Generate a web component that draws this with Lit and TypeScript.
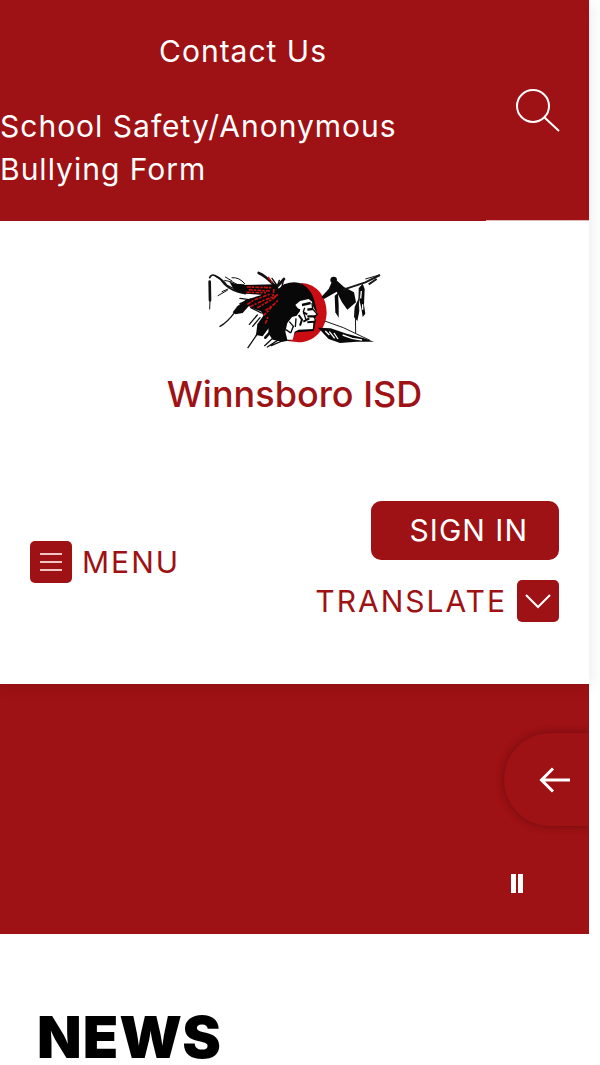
import { LitElement, html, css, svg } from "lit";
import { customElement } from "lit/decorators.js";

const emblem = svg`
  <g fill="none" stroke="#111" stroke-linecap="round">
    <path stroke-width="8" d="M29 62 L30 118"/>
    <path stroke-width="3" d="M30 118 L29 144"/>
    <path stroke-width="5" d="M29 50 Q34 38 46 44 Q62 52 72 68 Q88 84 112 92 L136 98"/>
    <path stroke-width="4" d="M48 46 Q68 54 80 72 L104 84"/>
    <path stroke-width="3" d="M54 104 L82 88 M66 92 L84 84 M76 48 L96 60 M96 50 Q118 48 134 68 M74 58 Q100 60 122 76"/>
    <path stroke-width="4" d="M60 196 Q82 184 104 154 M144 260 Q160 236 182 204 M148 190 L172 162 M158 196 L180 170 M120 112 L148 116 M120 128 L152 114 M152 140 L184 156 M194 254 L218 232 M202 258 L236 236 M214 254 L250 238"/>
    <path stroke-width="8" d="M176 36 Q196 44 224 74 M196 230 L210 214 M232 76 L252 54"/>
    <path stroke-width="4" d="M216 52 L230 72 M238 58 L230 82 M250 60 L244 84"/>
  </g>
  <path fill="#ca0d12" d="M302 66 C354 68 380 110 380 156 C378 206 342 244 296 244 L262 240 280 226 290 206 340 206 320 90Z"/>
  <g fill="#080808">
    <path d="M88 62 L106 68 132 70 144 84 142 98 118 96 102 86Z"/>
    <path d="M120 72 L228 70 240 90 214 104 140 98Z"/>
    <path d="M98 154 L112 136 136 118 160 116 146 136 128 156 106 160Z"/>
    <path d="M134 118 L216 92 244 100 236 150 204 160 150 138Z"/>
    <path d="M168 222 L172 190 190 164 214 150 224 176 204 204 188 226Z"/>
    <path d="M184 152 L232 86 252 70 Q282 58 306 68 Q328 82 338 104 L344 122 350 148 344 186 342 210 288 214 272 238 248 242 218 236 206 218 204 190Z"/>
  </g>
  <g fill="none" stroke="#c81010" stroke-width="5" stroke-dasharray="12 3 7 4">
    <path d="M140 78 L216 80 M146 86 L210 90 M140 94 L198 95 M204 48 L218 66"/>
    <path d="M142 130 L164 116 214 98 M150 137 L186 120 230 104 M172 140 L218 114 234 100 M196 148 L220 132 234 118 M190 164 L208 146 218 132 M196 188 L204 168 M222 84 L218 108"/>
  </g>
  <g fill="#fff">
    <path d="M286 132 L300 120 326 114 336 122 340 138 352 160 342 166 348 174 340 184 340 204 296 206 284 212 278 236 262 236 256 212 262 186 276 168 290 164 300 150Z"/>
  </g>
  <g fill="none" stroke="#080808">
    <path stroke-width="7" d="M306 132 L332 126 M286 144 L300 148 M322 146 L338 144 M322 166 L346 166"/>
    <path stroke-width="6" d="M296 162 L306 176 300 194 M310 154 L322 160 M310 182 L328 172 M322 184 L342 182"/>
    <path stroke-width="4" d="M268 182 L280 196 272 216 M288 172 L286 198 M258 206 L272 216 M314 140 L310 152 318 176 M336 126 L338 144 352 160 342 168 346 176 340 204"/>
  </g>
  <g fill="#090909">
    <circle cx="401" cy="57" r="10"/>
    <path d="M394 66 L412 60 432 78 462 94 468 124 442 146 426 124 410 92 372 114 364 108 386 84Z"/>
    <path d="M404 104 L414 96 416 132 416 170 406 154Z"/>
    <path d="M476 82 L488 68 494 84 492 132 496 158 488 168 484 142 478 116Z"/>
    <path d="M464 138 L476 112 478 150 472 180 462 168Z"/>
    <path d="M354 200 L392 202 440 218 492 232 522 242 470 242 420 246 386 234Z"/>
  </g>
  <g fill="none" stroke="#181818">
    <path stroke-width="6" d="M430 86 L496 64 540 42 M506 70 L530 54"/>
    <path stroke-width="3" d="M496 54 L538 42 M466 150 L467 216 M374 180 L430 200 510 238 M478 86 L474 160"/>
  </g>
  <g fill="none" stroke="#fff" stroke-width="4">
    <path d="M376 210 L388 222 M388 212 L404 232 M402 216 L414 234 M428 222 L456 232 486 237 M484 90 L482 112 M488 130 L488 146"/>
  </g>`;

@customElement("app-root")
export class AppRoot extends LitElement {
  static styles = css`
    :host {
      display: block;
      min-height: 100vh;
      overflow: hidden;
      background: #fff;
      color: #9e1114;
      font-family: Inter, "Liberation Sans", sans-serif;
      font-size: 30px;
      line-height: 43px;
    }
    * { box-sizing: border-box; }
    a { color: inherit; text-decoration: none; }
    button {
      border: 0;
      padding: 0;
      background: none;
      color: inherit;
      font: inherit;
      cursor: pointer;
    }
    svg { display: block; }
    .page { margin-right: 11px; }
    .header { position: relative; box-shadow: 0 2px 16px rgba(0, 0, 0, 0.1); }
    .topbar {
      display: flex;
      background: #9e1114;
      color: #fff;
      letter-spacing: 1px;
    }
    .links {
      flex: 1;
      display: flex;
      flex-direction: column;
      align-items: center;
      gap: 32px;
      padding: 30px 0;
    }
    .search {
      width: 103px;
      display: grid;
      place-items: center;
      border-bottom: 1px solid #e3b9ba;
    }
    .brand {
      display: flex;
      flex-direction: column;
      align-items: center;
      padding-top: 40px;
      background: #fff;
    }
    .name {
      margin: 0;
      padding: 12px 0;
      font-size: 36px;
      font-weight: 500;
    }
    .nav {
      display: flex;
      align-items: center;
      justify-content: space-between;
      padding: 73px 30px 62px;
      background: #fff;
    }
    .actions {
      display: flex;
      flex-direction: column;
      align-items: flex-end;
      gap: 20px;
    }
    .tool {
      display: flex;
      align-items: center;
      gap: 10px;
      line-height: 40px;
      letter-spacing: 2px;
    }
    .tile {
      width: 42px;
      height: 42px;
      display: grid;
      place-items: center;
      border-radius: 5px;
      background: #9e1114;
    }
    .signin {
      padding: 8px 31px 8px 39px;
      border-radius: 10px;
      background: #9e1114;
      color: #fff;
      letter-spacing: 1px;
    }
    .gallery {
      display: flex;
      flex-direction: column;
      align-items: flex-end;
      gap: 45px;
      padding: 49px 0 38px;
      background: #9e1114;
      overflow: hidden;
    }
    .prev {
      width: 85px;
      height: 93px;
      padding-left: 35px;
      border-radius: 46px 0 0 46px;
      box-shadow: 0 0 8px rgba(0, 0, 0, 0.3);
    }
    .pause { margin-right: 63px; }
    .news { padding: 75px 37px 0; color: #000; }
    .title {
      margin: 0;
      font-size: 58px;
      line-height: 56px;
      font-weight: 900;
      letter-spacing: 1px;
    }
  `;

  render() {
    return html`
      <div class="page">
        <header class="header">
          <div class="topbar">
            <nav class="links" aria-label="Quick links">
              <a href="#contact">Contact Us</a>
              <a href="#safety">School Safety/Anonymous Bullying Form</a>
            </nav>
            <button class="search" aria-label="Search">
              <svg width="46" height="44" viewBox="0 0 46 44" fill="none" stroke="#fff" stroke-width="2">
                <circle cx="18" cy="18" r="16" /><path d="M29 29 44 43" />
              </svg>
            </button>
          </div>
          <div class="brand">
            <svg width="190" height="100" viewBox="0 0 570 300" role="img" aria-label="District emblem">${emblem}</svg>
            <h1 class="name">Winnsboro ISD</h1>
          </div>
          <div class="nav">
            <button class="tool">
              <span class="tile">
                <svg width="22" height="20" viewBox="0 0 22 20" stroke="#eec4c5" stroke-width="2">
                  <path d="M0 2h22M0 10h22M0 18h22" />
                </svg>
              </span>
              MENU
            </button>
            <div class="actions">
              <button class="signin">SIGN IN</button>
              <button class="tool">
                TRANSLATE
                <span class="tile">
                  <svg width="26" height="16" viewBox="0 0 26 16" fill="none" stroke="#fff" stroke-width="2">
                    <path d="M1 2 13 14 25 2" />
                  </svg>
                </span>
              </button>
            </div>
          </div>
        </header>
        <section class="gallery" aria-label="Gallery">
          <button class="prev" aria-label="Previous slide">
            <svg width="32" height="26" viewBox="0 0 32 26" fill="none" stroke="#fff" stroke-width="3">
              <path d="M31 13H3M14 1.500 2.500 13 14 24.500" />
            </svg>
          </button>
          <button class="pause" aria-label="Pause slides">
            <svg width="18" height="25" viewBox="0 0 18 25" fill="#fff">
              <path d="M3 3h5v19H3zM10 3h5v19h-5z" />
            </svg>
          </button>
        </section>
        <section class="news"><h2 class="title">NEWS</h2></section>
      </div>
    `;
  }
}
